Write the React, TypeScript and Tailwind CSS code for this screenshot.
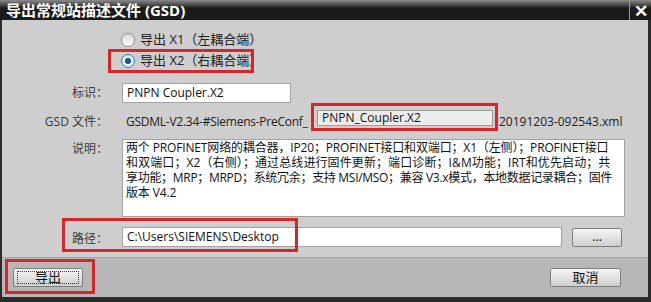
const FONT = "font-['Open_Sans','Noto_Sans_CJK_SC',sans-serif]";

function Radio({ checked }: { checked?: boolean }) {
  return (
    <span
      className={
        checked
          ? "flex h-[14px] w-[14px] items-center justify-center rounded-full border border-[#3a7dc0] bg-[radial-gradient(circle,#ffffff_30%,#a9d3f3_100%)]"
          : "flex h-[14px] w-[14px] items-center justify-center rounded-full border border-[#8c8c8c] bg-[linear-gradient(#dcdcdc,#ffffff)]"
      }
    >
      {checked && <span className="h-[6px] w-[6px] rounded-full bg-[#1b4f86]" />}
    </span>
  );
}

function Button({ children, focused, width }: { children: React.ReactNode; focused?: boolean; width: string }) {
  return (
    <div
      className={`${width} flex h-[19px] items-center justify-center rounded-[2px] border border-[#7e7e7e] bg-[linear-gradient(#f6f6f6,#e2e2e2_50%,#cfcfcf)] text-[13px] text-[#111]`}
    >
      <span
        className={
          focused
            ? "flex h-[13px] w-[calc(100%-6px)] items-center justify-center border border-dotted border-[#333]"
            : "flex items-center justify-center"
        }
      >
        {children}
      </span>
    </div>
  );
}

function Label({ children, className = "" }: { children: React.ReactNode; className?: string }) {
  return (
    <span className={`w-[106px] shrink-0 text-right text-[12px] leading-[16px] text-[#3a3a3a] ${className}`}>
      {children}
    </span>
  );
}

export default function App() {
  return (
    <div className={`relative flex h-[302px] w-[651px] flex-col overflow-hidden bg-[#2b2b2b] ${FONT}`}>
      {/* title bar */}
      <div className="flex h-[20px] shrink-0 items-stretch bg-[linear-gradient(#8a8a8a_0px,#3c3c3c_6px,#1b1b1b_8px,#1b1b1b)]">
        <div className="flex flex-1 items-center pl-[6px] pt-[1px] text-[15px] font-bold leading-none text-white">
          导出常规站描述文件 (GSD)
        </div>
        <div className="flex w-[22px] items-center justify-center border-l border-[#9a9a9a] text-[17px] font-bold leading-none text-white">
          ✕
        </div>
      </div>

      <div className="ml-[2px] mr-[3px] mb-[5px] flex flex-1 flex-col bg-[#cecece]">
        {/* body */}
        <div className="flex flex-1 flex-col">
          <div className="ml-[119px] mt-[11px] flex flex-col gap-[3px] text-[13px] text-[#222]">
            <label className="flex h-[18px] items-center gap-[5px]">
              <Radio />
              <span>导出 X1（左耦合端）</span>
            </label>
            <label className="flex h-[18px] items-center gap-[5px]">
              <Radio checked />
              <span>导出 X2（右耦合端）</span>
            </label>
          </div>

          <div className="mt-[13px] flex h-[20px] items-center gap-[14px]">
            <Label>标识：</Label>
            <div className="flex h-[20px] w-[169px] items-center border border-[#a3a3a3] bg-white px-[4px] text-[12px] text-[#111]">
              PNPN Coupler.X2
            </div>
          </div>

          <div className="mt-[7px] flex h-[16px] items-start">
            <Label className="mt-[4px]">GSD 文件：</Label>
            <span className="ml-[18px] mt-[4px] w-[183px] whitespace-nowrap text-[12px] leading-[16px] tracking-[-0.25px] text-[#222]">
              GSDML-V2.34-#Siemens-PreConf_
            </span>
            <div className="ml-[8px] flex h-[16px] w-[176px] items-center border border-[#9c9c9c] bg-[#ececec] px-[4px] text-[12px] text-[#111]">
              PNPN_Coupler.X2
            </div>
            <span className="ml-[6px] mt-[4px] whitespace-nowrap text-[12px] leading-[16px] text-[#222]">
              20191203-092543.xml
            </span>
          </div>

          <div className="mt-[13px] flex items-start gap-[14px]">
            <Label className="mt-[2px]">说明：</Label>
            <div className="h-[78px] w-[503px] overflow-hidden border border-[#a3a3a3] bg-white px-[3px] text-[12px] leading-[15px] tracking-[-0.15px] whitespace-nowrap text-[#111]">
              <div>两个 PROFINET网络的耦合器，IP20；PROFINET接口和双端口；X1（左侧）；PROFINET接口</div>
              <div className="tracking-[0.1px]">和双端口；X2（右侧）；通过总线进行固件更新；端口诊断；I&amp;M功能；IRT和优先启动；共</div>
              <div className="tracking-[-0.3px]">享功能；MRP；MRPD；系统冗余；支持 MSI/MSO；兼容 V3.x模式，本地数据记录耦合；固件</div>
              <div>版本 V4.2</div>
            </div>
          </div>

          <div className="mt-[10px] flex h-[20px] items-center gap-[14px]">
            <Label className="pt-[3px]">路径：</Label>
            <div className="flex h-[20px] w-[440px] items-center border border-[#a3a3a3] bg-white px-[4px] text-[12px] text-[#111]">
              C:\Users\SIEMENS\Desktop
            </div>
            <div className="-ml-[4px]">
              <Button width="w-[50px]">…</Button>
            </div>
          </div>
        </div>

        {/* footer */}
        <div className="flex h-[40px] shrink-0 items-center justify-between border-t border-[#a4a4a4] bg-[#b7b7b7] pl-[11px] pr-[27px]">
          <Button width="w-[70px]" focused>
            导出
          </Button>
          <Button width="w-[71px]">取消</Button>
        </div>
      </div>

      {/* red annotation boxes */}
      <div className="pointer-events-none absolute left-[108px] top-[49px] h-[24px] w-[146px] border-[3px] border-[#d5262c]" />
      <div className="pointer-events-none absolute left-[311px] top-[103px] h-[28px] w-[187px] border-[3px] border-[#d5262c]" />
      <div className="pointer-events-none absolute left-[62px] top-[218px] h-[34px] w-[236px] border-[3px] border-[#d5262c]" />
      <div className="pointer-events-none absolute left-[5px] top-[259px] h-[35px] w-[90px] border-[3px] border-[#d5262c]" />
    </div>
  );
}
